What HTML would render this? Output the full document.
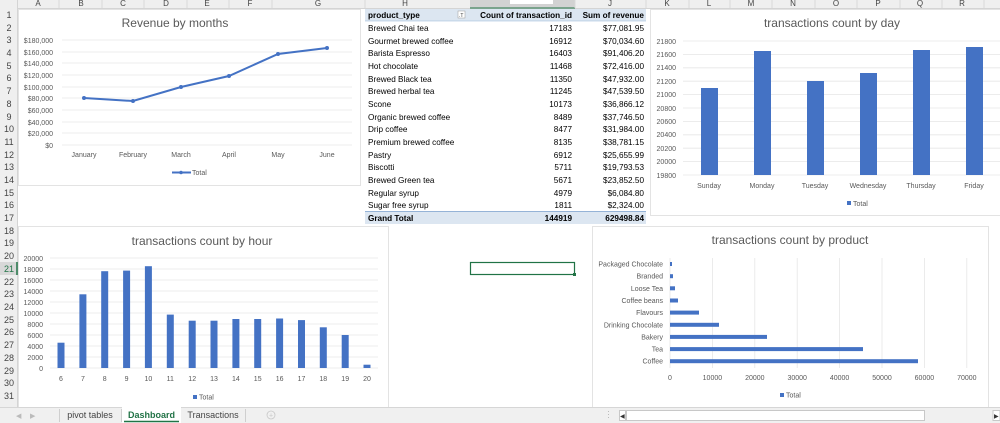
<!DOCTYPE html>
<html><head><meta charset="utf-8">
<style>
html,body{margin:0;padding:0;background:#fff;}
svg{display:block;font-family:"Liberation Sans",sans-serif;}
.ax{font-size:7px;fill:#595959;}
.tt{font-size:12px;fill:#595959;}
.tb{font-size:8.2px;fill:#000;}
.rh{font-size:9px;fill:#444;text-anchor:middle;}
.ch{font-size:8px;fill:#444;text-anchor:middle;}
</style></head>
<body>
<svg width="1000" height="423" viewBox="0 0 1000 423" xmlns="http://www.w3.org/2000/svg">
<rect width="1000" height="423" fill="#fff"/>
<!-- column header -->
<rect x="0" y="0" width="1000" height="8" fill="#efefef"/>
<line x1="0" y1="8.5" x2="1000" y2="8.5" stroke="#d4d4d4"/>
<rect x="470" y="0" width="105" height="8" fill="#d2d2d2"/>
<line x1="470" y1="8" x2="575" y2="8" stroke="#217346" stroke-width="1"/>
<rect x="510" y="0" width="43" height="4" fill="#fff"/>
<g stroke="#d8d8d8">
<line x1="59" y1="0" x2="59" y2="8"/><line x1="102" y1="0" x2="102" y2="8"/><line x1="144" y1="0" x2="144" y2="8"/><line x1="187" y1="0" x2="187" y2="8"/><line x1="229" y1="0" x2="229" y2="8"/><line x1="272" y1="0" x2="272" y2="8"/><line x1="365" y1="0" x2="365" y2="8"/><line x1="575" y1="0" x2="575" y2="8"/><line x1="646" y1="0" x2="646" y2="8"/><line x1="689" y1="0" x2="689" y2="8"/><line x1="730" y1="0" x2="730" y2="8"/><line x1="772" y1="0" x2="772" y2="8"/><line x1="815" y1="0" x2="815" y2="8"/><line x1="857" y1="0" x2="857" y2="8"/><line x1="900" y1="0" x2="900" y2="8"/><line x1="942" y1="0" x2="942" y2="8"/><line x1="984" y1="0" x2="984" y2="8"/>
</g>
<g class="ch">
<text x="38" y="6">A</text><text x="81" y="6">B</text><text x="123" y="6">C</text><text x="166" y="6">D</text><text x="207" y="6">E</text><text x="250" y="6">F</text><text x="318" y="6">G</text><text x="405" y="6">H</text><text x="610" y="6">J</text><text x="667" y="6">K</text><text x="709" y="6">L</text><text x="751" y="6">M</text><text x="793" y="6">N</text><text x="836" y="6">O</text><text x="878" y="6">P</text><text x="920" y="6">Q</text><text x="962" y="6">R</text>
</g>
<!-- row header -->
<rect x="0" y="0" width="17" height="407" fill="#efefef"/>
<line x1="17.5" y1="0" x2="17.5" y2="407" stroke="#d4d4d4"/>
<rect x="0" y="262" width="17" height="13" fill="#d8d8d8"/>
<line x1="17" y1="262" x2="17" y2="275" stroke="#217346" stroke-width="1.5"/>
<g class="rh">
<text x="9" y="18">1</text><text x="9" y="31">2</text><text x="9" y="43">3</text><text x="9" y="56">4</text><text x="9" y="69">5</text><text x="9" y="81">6</text><text x="9" y="94">7</text><text x="9" y="107">8</text><text x="9" y="120">9</text><text x="9" y="132">10</text><text x="9" y="145">11</text><text x="9" y="158">12</text><text x="9" y="170">13</text><text x="9" y="183">14</text><text x="9" y="196">15</text><text x="9" y="208">16</text><text x="9" y="221">17</text><text x="9" y="234">18</text><text x="9" y="246">19</text><text x="9" y="259">20</text><text x="9" y="272" fill="#217346">21</text><text x="9" y="285">22</text><text x="9" y="297">23</text><text x="9" y="310">24</text><text x="9" y="323">25</text><text x="9" y="335">26</text><text x="9" y="348">27</text><text x="9" y="361">28</text><text x="9" y="374">29</text><text x="9" y="386">30</text><text x="9" y="399">31</text>
</g>

<!-- Chart 1: Revenue by months -->
<rect x="18.5" y="9.5" width="342" height="176" fill="#fff" stroke="#e3e3e3"/>
<text class="tt" x="175" y="27" text-anchor="middle">Revenue by months</text>
<g stroke="#e6e6e6" stroke-width="0.8">
<line x1="62" y1="40" x2="352" y2="40"/><line x1="62" y1="52" x2="352" y2="52"/><line x1="62" y1="63" x2="352" y2="63"/><line x1="62" y1="75" x2="352" y2="75"/><line x1="62" y1="87" x2="352" y2="87"/><line x1="62" y1="98" x2="352" y2="98"/><line x1="62" y1="110" x2="352" y2="110"/><line x1="62" y1="122" x2="352" y2="122"/><line x1="62" y1="133" x2="352" y2="133"/><line x1="62" y1="145" x2="352" y2="145"/>
</g>
<g class="ax" text-anchor="end">
<text x="53" y="43">$180,000</text><text x="53" y="55">$160,000</text><text x="53" y="66">$140,000</text><text x="53" y="78">$120,000</text><text x="53" y="90">$100,000</text><text x="53" y="101">$80,000</text><text x="53" y="113">$60,000</text><text x="53" y="125">$40,000</text><text x="53" y="136">$20,000</text><text x="53" y="148">$0</text>
</g>
<polyline points="84,98 133,101 181,87 229,76 278,54 327,48" fill="none" stroke="#4472c4" stroke-width="2"/>
<g fill="#4472c4"><circle cx="84" cy="98" r="2"/><circle cx="133" cy="101" r="2"/><circle cx="181" cy="87" r="2"/><circle cx="229" cy="76" r="2"/><circle cx="278" cy="54" r="2"/><circle cx="327" cy="48" r="2"/></g>
<g class="ax" text-anchor="middle">
<text x="84" y="157">January</text><text x="133" y="157">February</text><text x="181" y="157">March</text><text x="229" y="157">April</text><text x="278" y="157">May</text><text x="327" y="157">June</text>
</g>
<line x1="172" y1="172.5" x2="191" y2="172.5" stroke="#4472c4" stroke-width="2"/><circle cx="181" cy="172.5" r="1.8" fill="#4472c4"/>
<text class="ax" x="192" y="175">Total</text>

<!-- Pivot table -->
<rect x="365" y="9" width="281" height="12" fill="#dce6f1"/>
<rect x="365" y="212" width="281" height="12" fill="#dce6f1"/>
<line x1="365" y1="211.5" x2="646" y2="211.5" stroke="#95b3d7"/>
<line x1="365" y1="21" x2="646" y2="21" stroke="#95b3d7" stroke-width="0.6"/>
<rect x="458" y="11" width="7" height="7" fill="#fff" stroke="#999" stroke-width="0.5"/>
<text x="459" y="17" font-size="5" fill="#333">.T</text>
<g class="tb" font-weight="bold">
<text x="368" y="18">product_type</text>
<text x="572" y="18" text-anchor="end">Count of transaction_id</text>
<text x="644" y="18" text-anchor="end">Sum of revenue</text>
<text x="368" y="221">Grand Total</text>
<text x="572" y="221" text-anchor="end">144919</text>
<text x="644" y="221" text-anchor="end">629498.84</text>
</g>
<g class="tb">
<text x="368" y="31">Brewed Chai tea</text><text x="572" y="31" text-anchor="end">17183</text><text x="644" y="31" text-anchor="end">$77,081.95</text>
<text x="368" y="44">Gourmet brewed coffee</text><text x="572" y="44" text-anchor="end">16912</text><text x="644" y="44" text-anchor="end">$70,034.60</text>
<text x="368" y="56">Barista Espresso</text><text x="572" y="56" text-anchor="end">16403</text><text x="644" y="56" text-anchor="end">$91,406.20</text>
<text x="368" y="69">Hot chocolate</text><text x="572" y="69" text-anchor="end">11468</text><text x="644" y="69" text-anchor="end">$72,416.00</text>
<text x="368" y="82">Brewed Black tea</text><text x="572" y="82" text-anchor="end">11350</text><text x="644" y="82" text-anchor="end">$47,932.00</text>
<text x="368" y="94">Brewed herbal tea</text><text x="572" y="94" text-anchor="end">11245</text><text x="644" y="94" text-anchor="end">$47,539.50</text>
<text x="368" y="107">Scone</text><text x="572" y="107" text-anchor="end">10173</text><text x="644" y="107" text-anchor="end">$36,866.12</text>
<text x="368" y="120">Organic brewed coffee</text><text x="572" y="120" text-anchor="end">8489</text><text x="644" y="120" text-anchor="end">$37,746.50</text>
<text x="368" y="132">Drip coffee</text><text x="572" y="132" text-anchor="end">8477</text><text x="644" y="132" text-anchor="end">$31,984.00</text>
<text x="368" y="145">Premium brewed coffee</text><text x="572" y="145" text-anchor="end">8135</text><text x="644" y="145" text-anchor="end">$38,781.15</text>
<text x="368" y="158">Pastry</text><text x="572" y="158" text-anchor="end">6912</text><text x="644" y="158" text-anchor="end">$25,655.99</text>
<text x="368" y="170">Biscotti</text><text x="572" y="170" text-anchor="end">5711</text><text x="644" y="170" text-anchor="end">$19,793.53</text>
<text x="368" y="183">Brewed Green tea</text><text x="572" y="183" text-anchor="end">5671</text><text x="644" y="183" text-anchor="end">$23,852.50</text>
<text x="368" y="196">Regular syrup</text><text x="572" y="196" text-anchor="end">4979</text><text x="644" y="196" text-anchor="end">$6,084.80</text>
<text x="368" y="208">Sugar free syrup</text><text x="572" y="208" text-anchor="end">1811</text><text x="644" y="208" text-anchor="end">$2,324.00</text>
</g>

<!-- Chart 3: by day -->
<rect x="650.5" y="9.5" width="352" height="206" fill="#fff" stroke="#e3e3e3"/>
<text class="tt" x="832" y="27" text-anchor="middle">transactions count by day</text>
<g stroke="#e6e6e6" stroke-width="0.8">
<line x1="683" y1="41" x2="1000" y2="41"/><line x1="683" y1="54.4" x2="1000" y2="54.4"/><line x1="683" y1="67.8" x2="1000" y2="67.8"/><line x1="683" y1="81.2" x2="1000" y2="81.2"/><line x1="683" y1="94.6" x2="1000" y2="94.6"/><line x1="683" y1="108" x2="1000" y2="108"/><line x1="683" y1="121.4" x2="1000" y2="121.4"/><line x1="683" y1="134.8" x2="1000" y2="134.8"/><line x1="683" y1="148.2" x2="1000" y2="148.2"/><line x1="683" y1="161.6" x2="1000" y2="161.6"/><line x1="683" y1="175" x2="1000" y2="175"/>
</g>
<g class="ax" text-anchor="end">
<text x="676" y="44">21800</text><text x="676" y="57">21600</text><text x="676" y="70">21400</text><text x="676" y="84">21200</text><text x="676" y="97">21000</text><text x="676" y="111">20800</text><text x="676" y="124">20600</text><text x="676" y="137">20400</text><text x="676" y="151">20200</text><text x="676" y="164">20000</text><text x="676" y="178">19800</text>
</g>
<g fill="#4472c4">
<rect x="701" y="88" width="17" height="87"/><rect x="754" y="51" width="17" height="124"/><rect x="807" y="81" width="17" height="94"/><rect x="860" y="73" width="17" height="102"/><rect x="913" y="50" width="17" height="125"/><rect x="966" y="47" width="17" height="128"/>
</g>
<g class="ax" text-anchor="middle">
<text x="709" y="188">Sunday</text><text x="762" y="188">Monday</text><text x="815" y="188">Tuesday</text><text x="868" y="188">Wednesday</text><text x="921" y="188">Thursday</text><text x="974" y="188">Friday</text>
</g>
<rect x="847" y="201" width="4" height="4" fill="#4472c4"/><text class="ax" x="853" y="206">Total</text>

<!-- Chart 4: by hour -->
<rect x="18.5" y="226.5" width="370" height="182" fill="#fff" stroke="#e3e3e3"/>
<text class="tt" x="202" y="245" text-anchor="middle">transactions count by hour</text>
<g stroke="#e6e6e6" stroke-width="0.8">
<line x1="50" y1="258" x2="378" y2="258"/><line x1="50" y1="269" x2="378" y2="269"/><line x1="50" y1="280" x2="378" y2="280"/><line x1="50" y1="291" x2="378" y2="291"/><line x1="50" y1="302" x2="378" y2="302"/><line x1="50" y1="313" x2="378" y2="313"/><line x1="50" y1="324" x2="378" y2="324"/><line x1="50" y1="335" x2="378" y2="335"/><line x1="50" y1="346" x2="378" y2="346"/><line x1="50" y1="357" x2="378" y2="357"/><line x1="50" y1="368" x2="378" y2="368"/>
</g>
<g class="ax" text-anchor="end">
<text x="43" y="261">20000</text><text x="43" y="272">18000</text><text x="43" y="283">16000</text><text x="43" y="294">14000</text><text x="43" y="305">12000</text><text x="43" y="316">10000</text><text x="43" y="327">8000</text><text x="43" y="338">6000</text><text x="43" y="349">4000</text><text x="43" y="360">2000</text><text x="43" y="371">0</text>
</g>
<g fill="#4472c4">
<rect x="57.5" y="342.7" width="7" height="25.3"/><rect x="79.4" y="294.3" width="7" height="73.7"/><rect x="101.2" y="271.2" width="7" height="96.8"/><rect x="123.1" y="270.6" width="7" height="97.4"/><rect x="144.9" y="266.2" width="7" height="101.8"/><rect x="166.8" y="314.6" width="7" height="53.4"/><rect x="188.7" y="320.7" width="7" height="47.3"/><rect x="210.5" y="320.7" width="7" height="47.3"/><rect x="232.4" y="319" width="7" height="49"/><rect x="254.2" y="319" width="7" height="49"/><rect x="276.1" y="318.5" width="7" height="49.5"/><rect x="298" y="320.1" width="7" height="47.9"/><rect x="319.8" y="327.3" width="7" height="40.7"/><rect x="341.7" y="335" width="7" height="33"/><rect x="363.5" y="364.7" width="7" height="3.3"/>
</g>
<g class="ax" text-anchor="middle">
<text x="61" y="381">6</text><text x="82.9" y="381">7</text><text x="104.7" y="381">8</text><text x="126.6" y="381">9</text><text x="148.4" y="381">10</text><text x="170.3" y="381">11</text><text x="192.2" y="381">12</text><text x="214" y="381">13</text><text x="235.9" y="381">14</text><text x="257.7" y="381">15</text><text x="279.6" y="381">16</text><text x="301.5" y="381">17</text><text x="323.3" y="381">18</text><text x="345.2" y="381">19</text><text x="367" y="381">20</text>
</g>
<rect x="193" y="395" width="4" height="4" fill="#4472c4"/><text class="ax" x="199" y="399.5">Total</text>

<!-- selected cell -->
<rect x="470.5" y="262.5" width="104" height="12" fill="none" stroke="#217346" stroke-width="1.2"/>
<rect x="573" y="273" width="3" height="3" fill="#217346"/>

<!-- Chart 5: by product -->
<rect x="592.5" y="226.5" width="396" height="182" fill="#fff" stroke="#e3e3e3"/>
<text class="tt" x="790" y="244" text-anchor="middle">transactions count by product</text>
<g stroke="#e6e6e6" stroke-width="0.8">
<line x1="670" y1="258" x2="670" y2="368"/><line x1="712.4" y1="258" x2="712.4" y2="368"/><line x1="754.8" y1="258" x2="754.8" y2="368"/><line x1="797.2" y1="258" x2="797.2" y2="368"/><line x1="839.6" y1="258" x2="839.6" y2="368"/><line x1="882" y1="258" x2="882" y2="368"/><line x1="924.4" y1="258" x2="924.4" y2="368"/><line x1="966.8" y1="258" x2="966.8" y2="368"/>
</g>
<g class="ax" text-anchor="end">
<text x="663" y="266.5">Packaged Chocolate</text><text x="663" y="278.7">Branded</text><text x="663" y="290.8">Loose Tea</text><text x="663" y="303">Coffee beans</text><text x="663" y="315.1">Flavours</text><text x="663" y="327.3">Drinking Chocolate</text><text x="663" y="339.4">Bakery</text><text x="663" y="351.6">Tea</text><text x="663" y="363.7">Coffee</text>
</g>
<g fill="#4472c4">
<rect x="670" y="262" width="2" height="4"/><rect x="670" y="274.2" width="3" height="4"/><rect x="670" y="286.3" width="5" height="4"/><rect x="670" y="298.5" width="8" height="4"/><rect x="670" y="310.6" width="29" height="4"/><rect x="670" y="322.8" width="49" height="4"/><rect x="670" y="334.9" width="97" height="4"/><rect x="670" y="347.1" width="193" height="4"/><rect x="670" y="359.2" width="248" height="4"/>
</g>
<g class="ax" text-anchor="middle">
<text x="670" y="380">0</text><text x="712.4" y="380">10000</text><text x="754.8" y="380">20000</text><text x="797.2" y="380">30000</text><text x="839.6" y="380">40000</text><text x="882" y="380">50000</text><text x="924.4" y="380">60000</text><text x="966.8" y="380">70000</text>
</g>
<rect x="780" y="393" width="4" height="4" fill="#4472c4"/><text class="ax" x="786" y="397.5">Total</text>

<!-- bottom tab bar -->
<rect x="0" y="407" width="1000" height="16" fill="#f0f0f0"/>
<line x1="0" y1="407.5" x2="1000" y2="407.5" stroke="#d6d6d6"/>
<text x="16" y="418" font-size="7" fill="#bbb">◀</text><text x="30" y="418" font-size="7" fill="#bbb">▶</text>
<line x1="59.5" y1="409" x2="59.5" y2="422" stroke="#cfcfcf"/>
<text x="90" y="418" font-size="9" fill="#444" text-anchor="middle">pivot tables</text>
<line x1="121.5" y1="409" x2="121.5" y2="422" stroke="#cfcfcf"/>
<rect x="122" y="407" width="59" height="16" fill="#fff"/>
<line x1="124" y1="421.5" x2="179" y2="421.5" stroke="#217346" stroke-width="1.5"/>
<text x="151.5" y="418" font-size="9" font-weight="bold" fill="#217346" text-anchor="middle">Dashboard</text>
<text x="213" y="418" font-size="9" fill="#444" text-anchor="middle">Transactions</text>
<line x1="245.5" y1="409" x2="245.5" y2="422" stroke="#cfcfcf"/>
<circle cx="271" cy="415" r="4" fill="none" stroke="#c8c8c8" stroke-width="0.8"/>
<text x="271" y="417.5" font-size="7" fill="#c8c8c8" text-anchor="middle">+</text>
<g fill="#bbb"><rect x="608" y="411" width="1" height="1"/><rect x="608" y="414" width="1" height="1"/><rect x="608" y="417" width="1" height="1"/></g>
<rect x="619.5" y="410.5" width="6" height="10" fill="#fff" stroke="#c8c8c8"/>
<text x="620" y="418" font-size="6" fill="#333">◀</text>
<rect x="626.5" y="410.5" width="298" height="10" fill="#fff" stroke="#c8c8c8"/>
<rect x="993" y="410.5" width="7" height="10" fill="#fff" stroke="#c8c8c8"/>
<text x="994" y="418" font-size="6" fill="#333">▶</text>
</svg>
</body></html>
